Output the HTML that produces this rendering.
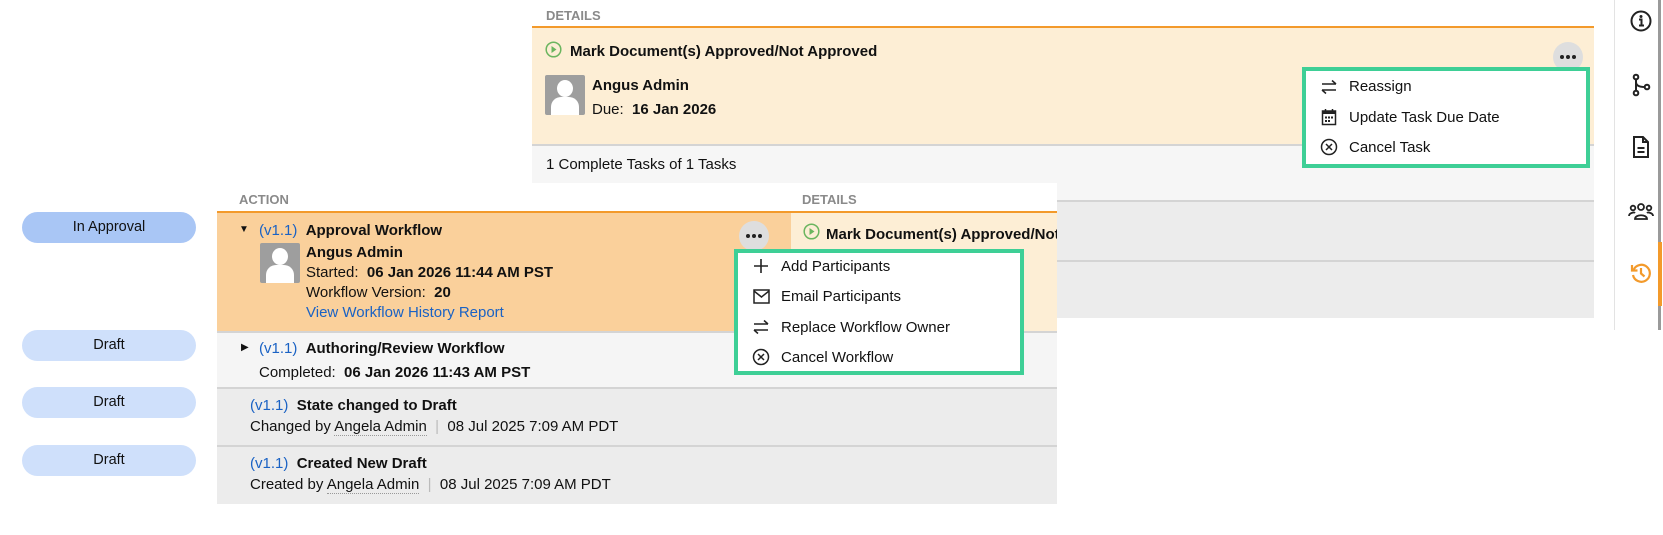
<!DOCTYPE html>
<html><head><meta charset="utf-8"><style>
*{box-sizing:border-box;margin:0;padding:0}
body{width:1663px;height:535px;background:#fff;font-family:"Liberation Sans",Arial,sans-serif;font-size:15px;color:#111;position:relative;overflow:hidden}
.a{position:absolute}
.hdr{color:#8a8a8a;font-weight:bold;font-size:13px}
.b{font-weight:bold}
.blue{color:#1a62c4}
.pill{position:absolute;left:22px;width:174px;height:31px;border-radius:16px;background:#cfe0fb;text-align:center;line-height:31px;font-size:14.5px}
.dots{position:absolute;width:30px;height:30px;border-radius:50%;background:#dedede}
.dots i{position:absolute;top:13px;width:4px;height:4px;border-radius:50%;background:#222}
.menu{position:absolute;border:4px solid #3ecf96;background:#fff}
.mi{position:absolute;font-size:15px}
svg{position:absolute}
.av{position:absolute;width:40px;height:40px;background:#9e9e9e;border-radius:2px;overflow:hidden}
.av:before{content:"";position:absolute;left:12px;top:5px;width:16px;height:17px;border-radius:50%;background:#fff}
.av:after{content:"";position:absolute;left:6px;top:22px;width:28px;height:22px;border-radius:10px 10px 0 0;background:#fff}
</style></head><body>
<div class="a hdr" style="left:546px;top:8px">DETAILS</div>
<div class="a" style="left:532px;top:26px;width:1062px;height:2px;background:#f39a2b"></div>
<div class="a" style="left:532px;top:28px;width:1062px;height:116px;background:#fdeed5"></div>
<div class="a" style="left:532px;top:144px;width:1062px;height:2px;background:#d4d4d4"></div>
<div class="a" style="left:532px;top:146px;width:1062px;height:172px;background:#f6f6f6"></div>
<div class="a" style="left:1057px;top:200px;width:537px;height:2px;background:#d4d4d4"></div>
<div class="a" style="left:1057px;top:202px;width:537px;height:58px;background:#ececec"></div>
<div class="a" style="left:1057px;top:260px;width:537px;height:2px;background:#d4d4d4"></div>
<div class="a" style="left:1057px;top:262px;width:537px;height:56px;background:#ececec"></div>
<svg style="left:545px;top:41px" width="17" height="17" viewBox="0 0 17 17"><circle cx="8.5" cy="8.5" r="7.3" fill="none" stroke="#6bb55f" stroke-width="1.5"/><path d="M6.5 5l5 3.5-5 3.5z" fill="#6bb55f"/></svg>
<div class="a b" style="left:570px;top:43px">Mark Document(s) Approved/Not Approved</div>
<div class="av" style="left:545px;top:75px"></div>
<div class="a b" style="left:592px;top:77px">Angus Admin</div>
<div class="a" style="left:592px;top:101px">Due:&nbsp; <b>16 Jan 2026</b></div>
<div class="a" style="left:546px;top:156px">1 Complete Tasks of 1 Tasks</div>
<div class="dots" style="left:1553px;top:42px"><i style="left:7px"></i><i style="left:13px"></i><i style="left:19px"></i></div>
<div class="menu" style="left:1302px;top:67px;width:288px;height:101px"></div>
<svg style="left:1320px;top:79px" width="18" height="16" viewBox="0 0 18 16" fill="none" stroke="#222" stroke-width="1.5"><path d="M2 5h14M12 1.5l4 3.5M16 11H2M6 14.5L2 11"/></svg>
<div class="mi" style="left:1349px;top:78px">Reassign</div>
<svg style="left:1321px;top:108px" width="16" height="18" viewBox="0 0 16 18"><rect x="1.5" y="3" width="13" height="13.5" fill="none" stroke="#222" stroke-width="1.5"/><rect x="1.5" y="3" width="13" height="3" fill="#222"/><path d="M4.5 1v3M11.5 1v3" stroke="#222" stroke-width="1.5"/><g fill="#222"><rect x="4" y="8.5" width="2" height="2"/><rect x="7" y="8.5" width="2" height="2"/><rect x="10" y="8.5" width="2" height="2"/><rect x="4" y="12" width="2" height="2"/><rect x="7" y="12" width="2" height="2"/></g></svg>
<div class="mi" style="left:1349px;top:109px">Update Task Due Date</div>
<svg style="left:1320px;top:138px" width="18" height="18" viewBox="0 0 18 18" fill="none" stroke="#222" stroke-width="1.5"><circle cx="9" cy="9" r="7.5"/><path d="M6 6l6 6M12 6l-6 6"/></svg>
<div class="mi" style="left:1349px;top:139px">Cancel Task</div>
<div class="a" style="left:1614px;top:0;width:1px;height:330px;background:#e3e3e3"></div>
<div class="a" style="left:1658px;top:0;width:3px;height:330px;background:#9a9a9a"></div>
<div class="a" style="left:1658px;top:242px;width:4px;height:64px;background:#f39a2b"></div>
<svg style="left:1630px;top:10px" width="22" height="22" viewBox="0 0 22 22"><circle cx="11" cy="11" r="9.5" fill="none" stroke="#222" stroke-width="2"/><circle cx="11" cy="6.5" r="1.5" fill="#222"/><path d="M9 9.5h2.5v6M9 15.5h5" stroke="#222" stroke-width="2" fill="none"/></svg>
<svg style="left:1630px;top:73px" width="22" height="24" viewBox="0 0 22 24" fill="none" stroke="#222" stroke-width="2"><circle cx="6" cy="4" r="2.3"/><circle cx="6" cy="20" r="2.3"/><circle cx="17" cy="14" r="2.3"/><path d="M6 6.3v11.4M6 9c0 4 4 5 8.8 5"/></svg>
<svg style="left:1632px;top:136px" width="18" height="22" viewBox="0 0 18 22" fill="none" stroke="#222" stroke-width="2"><path d="M2 1h9l5 5v15H2z M11 1v5h5"/><path d="M5.5 12h7M5.5 16h7"/></svg>
<svg style="left:1628px;top:202px" width="26" height="18" viewBox="0 0 26 18" fill="none" stroke="#222" stroke-width="1.8"><circle cx="13" cy="5" r="3"/><circle cx="5" cy="6" r="2.3"/><circle cx="21" cy="6" r="2.3"/><path d="M7 17c0-5 12-5 12 0zM1 14c0-3 5-4 6-3M25 14c0-3-5-4-6-3"/></svg>
<svg style="left:1630px;top:262px" width="22" height="22" viewBox="0 0 22 22" fill="none" stroke="#f39a2b" stroke-width="2.2"><path d="M3.5 8A8.5 8.5 0 1 1 3 13"/><path d="M2 3v5.5h5.5"/><path d="M11 6v5.5l3.5 3"/></svg>
<div class="a" style="left:217px;top:183px;width:840px;height:321px;background:#fff"></div>
<div class="a hdr" style="left:239px;top:192px">ACTION</div>
<div class="a hdr" style="left:802px;top:192px">DETAILS</div>
<div class="a" style="left:217px;top:211px;width:840px;height:2px;background:#f39a2b"></div>
<div class="a" style="left:217px;top:213px;width:574px;height:118px;background:#fad09b"></div>
<div class="a" style="left:791px;top:213px;width:266px;height:118px;background:#fdeed5"></div>
<div class="a" style="left:217px;top:331px;width:840px;height:2px;background:#d4d4d4"></div>
<div class="a" style="left:217px;top:333px;width:840px;height:54px;background:#f5f5f5"></div>
<div class="a" style="left:217px;top:387px;width:840px;height:2px;background:#d4d4d4"></div>
<div class="a" style="left:217px;top:389px;width:840px;height:56px;background:#ececec"></div>
<div class="a" style="left:217px;top:445px;width:840px;height:2px;background:#d4d4d4"></div>
<div class="a" style="left:217px;top:447px;width:840px;height:57px;background:#ececec"></div>
<div class="pill" style="left:22px;top:212px;background:#a9c6f5">In Approval</div>
<div class="pill" style="top:330px">Draft</div>
<div class="pill" style="top:387px">Draft</div>
<div class="pill" style="top:445px">Draft</div>
<div class="a" style="left:239px;top:224px;font-size:10px">▼</div>
<div class="a" style="left:259px;top:222px"><span class="blue">(v1.1)</span>&nbsp; <b>Approval Workflow</b></div>
<div class="av" style="left:260px;top:243px"></div>
<div class="a b" style="left:306px;top:244px">Angus Admin</div>
<div class="a" style="left:306px;top:264px">Started:&nbsp; <b>06 Jan 2026 11:44 AM PST</b></div>
<div class="a" style="left:306px;top:284px">Workflow Version:&nbsp; <b>20</b></div>
<div class="a blue" style="left:306px;top:304px">View Workflow History Report</div>
<div class="dots" style="left:739px;top:221px"><i style="left:7px"></i><i style="left:13px"></i><i style="left:19px"></i></div>
<svg style="left:803px;top:223px" width="17" height="17" viewBox="0 0 17 17"><circle cx="8.5" cy="8.5" r="7.3" fill="none" stroke="#6bb55f" stroke-width="1.5"/><path d="M6.5 5l5 3.5-5 3.5z" fill="#6bb55f"/></svg>
<div class="a b" style="left:826px;top:226px;width:231px;overflow:hidden;white-space:nowrap">Mark Document(s) Approved/Not Approved</div>
<div class="a" style="left:241px;top:342px;font-size:10px">▶</div>
<div class="a" style="left:259px;top:340px"><span class="blue">(v1.1)</span>&nbsp; <b>Authoring/Review Workflow</b></div>
<div class="a" style="left:259px;top:364px">Completed:&nbsp; <b>06 Jan 2026 11:43 AM PST</b></div>
<div class="a" style="left:250px;top:397px"><span class="blue">(v1.1)</span>&nbsp; <b>State changed to Draft</b></div>
<div class="a" style="left:250px;top:418px">Changed by <span style="border-bottom:1px dotted #999">Angela Admin</span> <span style="color:#bbb">&nbsp;|&nbsp;</span> 08 Jul 2025 7:09 AM PDT</div>
<div class="a" style="left:250px;top:455px"><span class="blue">(v1.1)</span>&nbsp; <b>Created New Draft</b></div>
<div class="a" style="left:250px;top:476px">Created by <span style="border-bottom:1px dotted #999">Angela Admin</span> <span style="color:#bbb">&nbsp;|&nbsp;</span> 08 Jul 2025 7:09 AM PDT</div>
<div class="menu" style="left:734px;top:249px;width:290px;height:126px"></div>
<svg style="left:753px;top:258px" width="16" height="16" viewBox="0 0 16 16" stroke="#222" stroke-width="1.6"><path d="M8 1v14M1 8h14"/></svg>
<div class="mi" style="left:781px;top:258px">Add Participants</div>
<svg style="left:753px;top:289px" width="17" height="15" viewBox="0 0 17 15" fill="none" stroke="#222" stroke-width="1.5"><rect x="1" y="1" width="15" height="13"/><path d="M1 2l7.5 6L16 2"/></svg>
<div class="mi" style="left:781px;top:288px">Email Participants</div>
<svg style="left:752px;top:319px" width="18" height="16" viewBox="0 0 18 16" fill="none" stroke="#222" stroke-width="1.5"><path d="M2 5h14M12 1.5l4 3.5M16 11H2M6 14.5L2 11"/></svg>
<div class="mi" style="left:781px;top:319px">Replace Workflow Owner</div>
<svg style="left:752px;top:348px" width="18" height="18" viewBox="0 0 18 18" fill="none" stroke="#222" stroke-width="1.5"><circle cx="9" cy="9" r="7.5"/><path d="M6 6l6 6M12 6l-6 6"/></svg>
<div class="mi" style="left:781px;top:349px">Cancel Workflow</div>
</body></html>
